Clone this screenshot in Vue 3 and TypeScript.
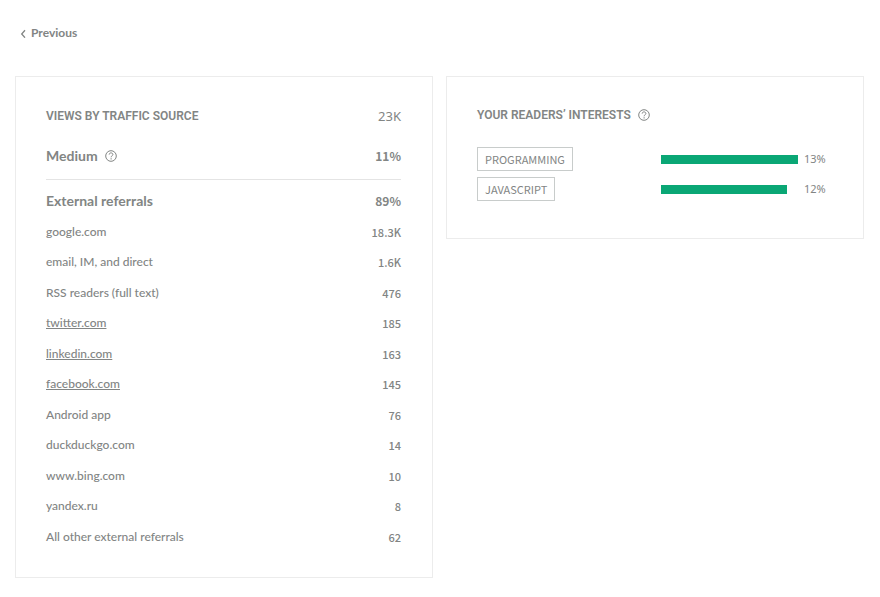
<script setup lang="ts">
interface Referral {
  name: string
  views: string
  href?: string
}
interface Interest {
  name: string
  percent: number
}

const referrals: Referral[] = [
  { name: 'google.com', views: '18.3K' },
  { name: 'email, IM, and direct', views: '1.6K' },
  { name: 'RSS readers (full text)', views: '476' },
  { name: 'twitter.com', views: '185', href: '#twitter' },
  { name: 'linkedin.com', views: '163', href: '#linkedin' },
  { name: 'facebook.com', views: '145', href: '#facebook' },
  { name: 'Android app', views: '76' },
  { name: 'duckduckgo.com', views: '14' },
  { name: 'www.bing.com', views: '10' },
  { name: 'yandex.ru', views: '8' },
  { name: 'All other external referrals', views: '62' },
]

const interests: Interest[] = [
  { name: 'PROGRAMMING', percent: 13 },
  { name: 'JAVASCRIPT', percent: 12 },
]
const maxPercent = Math.max(...interests.map((i) => i.percent))
</script>

<template>
  <main class="page">
    <nav>
      <a class="previous" href="#previous">
        <svg width="6" height="9" viewBox="0 0 6 9" aria-hidden="true">
          <path d="M5 1.3 1.7 5 5 8.7" fill="none" stroke="currentColor" stroke-width="1.3" />
        </svg>
        Previous
      </a>
    </nav>
    <div class="cards">
      <section class="card">
        <table class="sources">
          <thead>
            <tr class="title-row">
              <th scope="col">VIEWS BY TRAFFIC SOURCE</th>
              <td class="total">23K</td>
            </tr>
          </thead>
          <tbody>
            <tr class="group-row medium">
              <th scope="row">
                <span class="with-help">
                  Medium
                  <button class="help" type="button">
                    <svg width="12" height="12" viewBox="0 0 12 12" aria-hidden="true">
                      <circle cx="6" cy="6" r="5.3" />
                      <path d="M4.2 4.6C4.2 3.5 5 2.9 6 2.9s1.9.6 1.9 1.6C7.9 5.8 6.1 5.7 6.1 7.3M6.1 8.2v1.3" />
                    </svg>
                  </button>
                </span>
              </th>
              <td>11%</td>
            </tr>
            <tr class="group-row external">
              <th scope="row">External referrals</th>
              <td>89%</td>
            </tr>
          </tbody>
          <tbody class="items">
            <tr v-for="r in referrals" :key="r.name">
              <th scope="row">
                <a v-if="r.href" :href="r.href">{{ r.name }}</a>
                <template v-else>{{ r.name }}</template>
              </th>
              <td>{{ r.views }}</td>
            </tr>
          </tbody>
        </table>
      </section>
      <section class="card">
        <h2 class="with-help">
          YOUR READERS’ INTERESTS
          <button class="help" type="button">
            <svg width="12" height="12" viewBox="0 0 12 12" aria-hidden="true">
              <circle cx="6" cy="6" r="5.3" />
              <path d="M4.2 4.6C4.2 3.5 5 2.9 6 2.9s1.9.6 1.9 1.6C7.9 5.8 6.1 5.7 6.1 7.3M6.1 8.2v1.3" />
            </svg>
          </button>
        </h2>
        <ul class="interests">
          <li v-for="i in interests" :key="i.name">
            <span class="tag-cell"><span class="tag">{{ i.name }}</span></span>
            <span class="track">
              <span class="bar" :style="{ width: (i.percent / maxPercent) * 100 + '%' }"></span>
            </span>
            <span class="percent">{{ i.percent }}%</span>
          </li>
        </ul>
      </section>
    </div>
  </main>
</template>

<style>
body {
  background: #fff;
}
</style>

<style scoped>
.page {
  padding: 24px 16px 20px 15px;
  font-family: Lato, "Noto Sans", sans-serif;
  font-size: 12px;
  font-weight: 500;
  line-height: 18px;
  color: #828584;
}
.previous {
  display: inline-flex;
  align-items: center;
  gap: 5px;
  padding-left: 5px;
  color: inherit;
  font-weight: 700;
  text-decoration: none;
}
nav {
  display: flex;
}
.cards {
  display: grid;
  grid-template-columns: 1fr 1fr;
  align-items: start;
  gap: 13px;
  margin-top: 34px;
}
.card {
  padding: 23px 31px 25px 30px;
  border: 1px solid #ececec;
}
.sources {
  width: 100%;
  border-collapse: collapse;
}
th,
td {
  padding: 0;
  text-align: left;
  font-weight: 500;
}
td {
  text-align: right;
}
.title-row {
  height: 31px;
}
.title-row th,
h2 {
  font-family: Roboto, sans-serif;
  font-size: 12px;
  font-weight: 600;
}
.title-row .total {
  font-family: "Noto Sans", sans-serif;
  font-size: 13px;
  font-weight: 400;
}
.group-row th,
.group-row td {
  font-weight: 700;
}
.group-row th {
  font-size: 14px;
}
.group-row td {
  font-family: "Noto Sans CJK SC", sans-serif;
  font-size: 12px;
}
.medium {
  height: 48px;
  border-bottom: 1px solid #e4e4e4;
}
.medium th,
.medium td {
  padding-top: 2px;
}
.external {
  height: 37px;
}
.external th,
.external td {
  padding-top: 6px;
}
.items tr {
  height: 31px;
}
.items tr:nth-child(even) {
  height: 30px;
}
.items a {
  color: inherit;
}
.items td {
  font-family: "Noto Sans CJK SC", sans-serif;
  font-size: 11px;
}
.with-help {
  display: flex;
  align-items: center;
  gap: 7px;
}
.help {
  display: flex;
  padding: 0;
  border: 0;
  background: none;
  color: inherit;
}
.help svg {
  fill: none;
  stroke: currentColor;
}
h2 {
  margin: 0;
  padding-top: 6px;
}
.interests {
  display: grid;
  gap: 6px;
  margin: 23px 0 12px;
  padding: 0;
  list-style: none;
}
.interests li {
  display: grid;
  grid-template-columns: 184px 1fr 34px;
  align-items: center;
}
.tag-cell {
  display: flex;
}
.tag {
  padding: 2px 7px;
  border: 1px solid #c8cccb;
  font-family: "Noto Sans CJK SC", sans-serif;
  font-size: 11px;
  font-weight: 400;
}
.bar {
  display: block;
  height: 9px;
  background: #0aa775;
}
.percent {
  padding-left: 6px;
  font-family: "Noto Sans", sans-serif;
  font-size: 11px;
  font-weight: 400;
}
</style>
